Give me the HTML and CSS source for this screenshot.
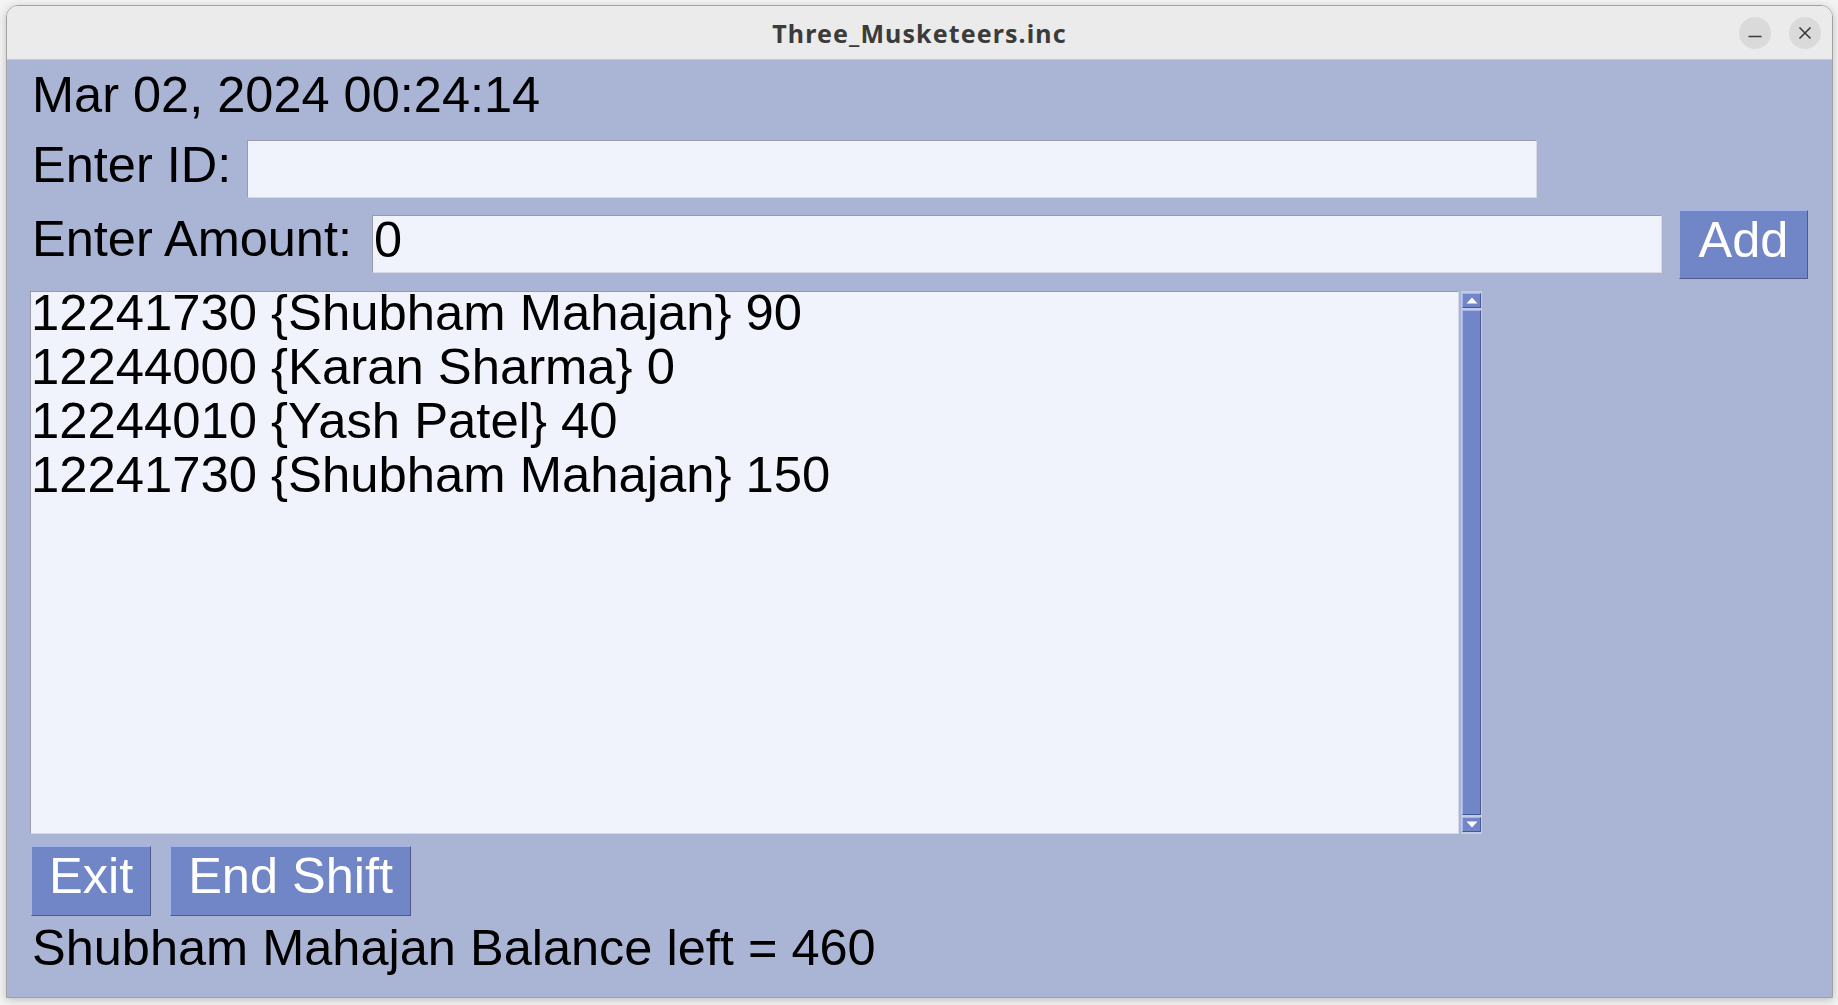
FILE: index.html
```html
<!DOCTYPE html>
<html lang="en">
<head>
<meta charset="utf-8">
<title>Three_Musketeers.inc</title>
<link rel="stylesheet" href="styles.css">
</head>
<body>
<div class="window">
  <div class="titlebar">
    <div class="title-spacer"></div>
    <div class="title">Three_Musketeers.inc</div>
    <div class="controls">
      <span class="ctl"><svg width="16" height="16" viewBox="0 0 16 16"><path d="M1.5 11.5h13" stroke="#3a3a3a" stroke-width="1.6" fill="none"/></svg></span>
      <span class="ctl"><svg width="16" height="16" viewBox="0 0 16 16"><path d="M2.5 2.5l11 11M13.5 2.5l-11 11" stroke="#3a3a3a" stroke-width="1.6" fill="none"/></svg></span>
    </div>
  </div>
  <div class="content">
    <div class="date">Mar 02, 2024 00:24:14</div>
    <div class="row row-id">
      <label class="label label-id" for="id">Enter ID:</label>
      <input class="entry entry-id" id="id" type="text" value="">
    </div>
    <div class="row row-amount">
      <label class="label label-amount" for="amt">Enter Amount:</label>
      <input class="entry entry-amount" id="amt" type="text" value="0">
      <button class="btn btn-add">Add</button>
    </div>
    <div class="list-row">
      <div class="listbox">
        <ul class="items">
          <li>12241730 {Shubham Mahajan} 90</li>
          <li>12244000 {Karan Sharma} 0</li>
          <li>12244010 {Yash Patel} 40</li>
          <li>12241730 {Shubham Mahajan} 150</li>
        </ul>
      </div>
      <div class="scrollbar">
        <div class="sb-btn"><svg width="12" height="7" viewBox="0 0 12 7"><path d="M6 0.5L11.5 6.5H0.5Z" fill="#fff"/></svg></div>
        <div class="sb-slider"></div>
        <div class="sb-btn"><svg width="12" height="7" viewBox="0 0 12 7"><path d="M0.5 0.5H11.5L6 6.5Z" fill="#fff"/></svg></div>
      </div>
    </div>
    <div class="buttons">
      <button class="btn">Exit</button>
      <button class="btn">End Shift</button>
    </div>
    <div class="balance">Shubham Mahajan Balance left = 460</div>
  </div>
</div>
</body>
</html>
```

FILE: styles.css
```css
html, body {
  margin: 0;
  padding: 0;
}

body {
  background: #f3f3f3;
  width: 1838px;
  height: 1005px;
  overflow: hidden;
  font-family: "Liberation Sans", Arial, sans-serif;
}

.window {
  margin: 5px 0 0 6px;
  width: 1827px;
  height: 993px;
  box-sizing: border-box;
  border: 1px solid #a2a2a2;
  border-radius: 12px 12px 0 0;
  overflow: hidden;
  display: flex;
  flex-direction: column;
  box-shadow: 0 2px 8px rgba(0, 0, 0, 0.22);
}

.titlebar {
  height: 54px;
  box-sizing: border-box;
  border-bottom: 1px solid #cdcdcd;
  background: #ebebeb;
  display: grid;
  grid-template-columns: 1fr auto 1fr;
  align-items: center;
  flex: none;
}

.title {
  font-family: "Noto Sans", "DejaVu Sans", sans-serif;
  font-weight: 700;
  font-size: 25px;
  color: #3b3b3b;
  letter-spacing: 1.1px;
}

.controls {
  justify-self: end;
  display: flex;
  gap: 18px;
  margin-right: 11px;
}

.ctl {
  width: 32px;
  height: 32px;
  border-radius: 50%;
  background: #dadada;
  display: flex;
  align-items: center;
  justify-content: center;
}

.content {
  flex: 1;
  background: #aab4d4;
  padding: 8px 0 0 25px;
  display: flex;
  flex-direction: column;
  align-items: flex-start;
  font-size: 50.5px;
  line-height: 54px;
  color: #000;
}

.date {
  height: 54px;
}

.row {
  display: flex;
  align-items: flex-start;
}

.row-id {
  margin-top: 18px;
  height: 58px;
}

.row-amount {
  margin-top: 12px;
  height: 69px;
}

.label {
  display: block;
  height: 54px;
  white-space: nowrap;
}

.label-id {
  margin-top: -2px;
}

.label-amount {
  margin-top: 2px;
}

.entry {
  width: 1290px;
  height: 58px;
  box-sizing: border-box;
  border: 1px solid;
  border-color: #989ca9 #d7dae4 #d7dae4 #989ca9;
  background: #f0f3fc;
  padding: 0 0 9px 1px;
  font-family: "Liberation Sans", Arial, sans-serif;
  font-size: 50.5px;
  line-height: normal;
  color: #000;
  outline: none;
}

.entry-id {
  margin-left: 16px;
}

.entry-amount {
  margin-top: 5px;
  margin-left: 20px;
}

.btn {
  height: 70px;
  box-sizing: border-box;
  border: 1px solid;
  border-color: #a4b2ec #4d5a8b #4d5a8b #a4b2ec;
  background: #7186c6;
  color: #fff;
  font-family: "Liberation Sans", Arial, sans-serif;
  font-size: 50.5px;
  line-height: 54px;
  padding: 2px 17px 0;
  display: flex;
  align-items: flex-start;
  justify-content: center;
  white-space: nowrap;
}

.btn-add {
  height: 69px;
  width: 129px;
  margin-left: 17px;
  padding: 2px 0 0;
}

.list-row {
  margin-top: 12px;
  margin-left: -2px;
  display: flex;
  height: 543px;
}

.listbox {
  width: 1429px;
  height: 543px;
  box-sizing: border-box;
  border: 1px solid;
  border-color: #979ba8 #d7dae4 #d7dae4 #979ba8;
  background: #f0f3fc;
  overflow: hidden;
}

.items {
  list-style: none;
  margin: -6px 0 0 0;
  padding: 0;
  font-size: 50.8px;
  white-space: nowrap;
}

.scrollbar {
  margin-left: 2px;
  width: 21px;
  height: 543px;
  box-sizing: border-box;
  border: 1px solid #c2cae8;
  background: #c2cae8;
  display: flex;
  flex-direction: column;
  gap: 2px;
  padding: 1px 0;
}

.sb-btn,
.sb-slider {
  box-sizing: border-box;
  border: 1px solid;
  border-color: #a7b5ec #4b5890 #4b5890 #a7b5ec;
  background: #7186c6;
}

.sb-btn {
  height: 15px;
  flex: none;
  display: flex;
  align-items: center;
  justify-content: center;
}

.sb-slider {
  flex: 1;
}

.buttons {
  margin-top: 12px;
  margin-left: -1px;
  display: flex;
  gap: 19px;
  height: 70px;
}

.balance {
  margin-top: 5px;
  height: 54px;
  white-space: nowrap;
}
```
